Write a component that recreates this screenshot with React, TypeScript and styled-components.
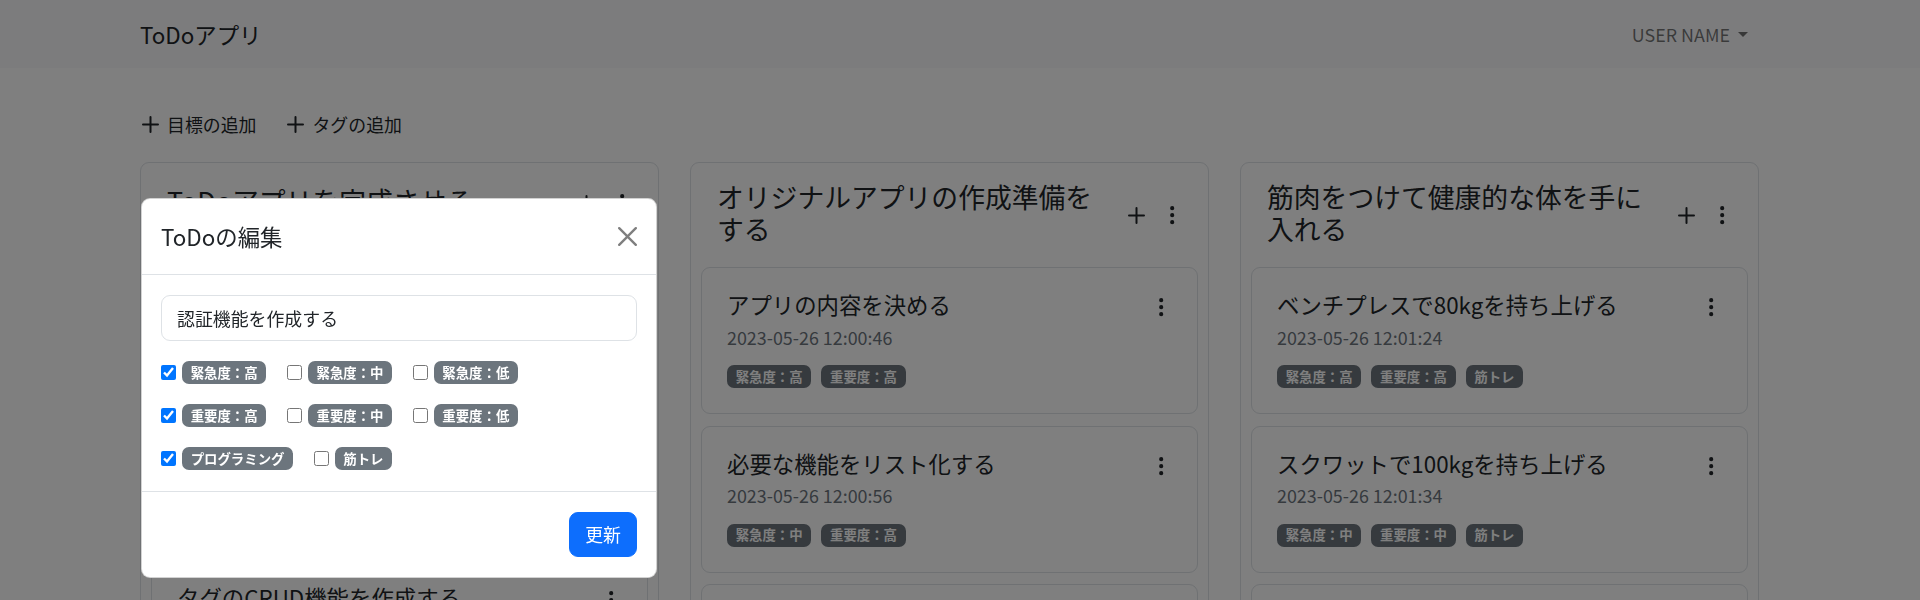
import React from 'react';
import styled, { createGlobalStyle } from 'styled-components';

const GlobalStyle = createGlobalStyle`
  * {
    box-sizing: border-box;
  }
  html,
  body {
    margin: 0;
    padding: 0;
  }
  body {
    font-family: 'Noto Sans CJK JP', 'Noto Sans', sans-serif;
    font-size: 17.9px;
    line-height: 1.7;
    color: #212529;
    background: #fff;
    overflow: hidden;
  }
`;

type TaskT = {
  title: string;
  date: string;
  tags: string[];
};

type GoalT = {
  title: string;
  tasks: TaskT[];
};

const goals: GoalT[] = [
  {
    title: 'ToDoアプリを完成させる',
    tasks: [
      {
        title: '認証機能を作成する',
        date: '2023-05-26 12:00:12',
        tags: ['緊急度：高', '重要度：高', 'プログラミング'],
      },
      {
        title: 'ToDoのCRUD機能を作成する',
        date: '2023-05-26 12:00:24',
        tags: ['緊急度：中', '重要度：高', 'プログラミング'],
      },
      {
        title: 'タグのCRUD機能を作成する',
        date: '2023-05-26 12:00:36',
        tags: ['緊急度：中', '重要度：中', 'プログラミング'],
      },
    ],
  },
  {
    title: 'オリジナルアプリの作成準備をする',
    tasks: [
      { title: 'アプリの内容を決める', date: '2023-05-26 12:00:46', tags: ['緊急度：高', '重要度：高'] },
      { title: '必要な機能をリスト化する', date: '2023-05-26 12:00:56', tags: ['緊急度：中', '重要度：高'] },
      { title: '画面設計を行う', date: '2023-05-26 12:01:06', tags: ['緊急度：低', '重要度：中'] },
    ],
  },
  {
    title: '筋肉をつけて健康的な体を手に入れる',
    tasks: [
      {
        title: 'ベンチプレスで80kgを持ち上げる',
        date: '2023-05-26 12:01:24',
        tags: ['緊急度：高', '重要度：高', '筋トレ'],
      },
      {
        title: 'スクワットで100kgを持ち上げる',
        date: '2023-05-26 12:01:34',
        tags: ['緊急度：中', '重要度：中', '筋トレ'],
      },
      {
        title: 'デッドリフトで120kgを持ち上げる',
        date: '2023-05-26 12:01:44',
        tags: ['緊急度：低', '重要度：中', '筋トレ'],
      },
    ],
  },
];

const tagRows: { label: string; checked: boolean }[][] = [
  [
    { label: '緊急度：高', checked: true },
    { label: '緊急度：中', checked: false },
    { label: '緊急度：低', checked: false },
  ],
  [
    { label: '重要度：高', checked: true },
    { label: '重要度：中', checked: false },
    { label: '重要度：低', checked: false },
  ],
  [
    { label: 'プログラミング', checked: true },
    { label: '筋トレ', checked: false },
  ],
];

/* ---------- navbar ---------- */

const Navbar = styled.nav`
  height: 68px;
  display: flex;
  align-items: center;
  justify-content: space-between;
  padding: 0 162px 0 140px;
  background: #f8f9fa;
`;

const Brand = styled.a`
  font-size: 22.4px;
  line-height: 1.7;
  color: #212529;
  text-decoration: none;
`;

const UserMenu = styled.button`
  display: flex;
  align-items: center;
  padding: 0 10px;
  border: 0;
  background: none;
  font: inherit;
  color: rgba(0, 0, 0, 0.55);
  cursor: pointer;

  &::after {
    content: '';
    margin-left: 8px;
    border-top: 5.4px solid;
    border-left: 5px solid transparent;
    border-right: 5px solid transparent;
  }
`;

/* ---------- board ---------- */

const Main = styled.main`
  padding: 0 162px 0 140px;
`;

const ActionBar = styled.div`
  display: flex;
  align-items: center;
  gap: 31px;
  height: 45px;
  margin-top: 34px;
  padding-left: 2px;
`;

const ActionButton = styled.button`
  display: flex;
  align-items: center;
  gap: 8px;
  padding: 0;
  border: 0;
  background: none;
  font: inherit;
  color: #212529;
  cursor: pointer;
`;

const Board = styled.div`
  display: grid;
  grid-template-columns: repeat(3, 519px);
  column-gap: 31px;
  align-items: start;
  margin-top: 15px;
`;

const Column = styled.section`
  border: 1px solid #dee2e6;
  border-radius: 9px;
  padding: 10px;
`;

const ColumnHeader = styled.div`
  display: flex;
  align-items: center;
  gap: 10px;
  padding: 8px 8px 0 16px;
  margin-bottom: 22px;
`;

const ColumnTitle = styled.h4`
  flex: 1;
  min-width: 0;
  margin: 0;
  font-size: 26.8px;
  font-weight: 400;
  line-height: 1.2;
`;

const HeaderButtons = styled.div`
  display: flex;
  margin-top: 4px;
`;

const IconButton = styled.button`
  width: 36px;
  height: 36px;
  display: flex;
  align-items: center;
  justify-content: center;
  padding: 0;
  border: 0;
  background: none;
  color: #212529;
  cursor: pointer;
`;

const CardList = styled.div`
  display: flex;
  flex-direction: column;
  gap: 11.4px;
`;

const TaskCard = styled.article`
  border: 1px solid #dee2e6;
  border-radius: 9px;
  padding: 23px 25px 25px;
`;

const CardTop = styled.div`
  display: flex;
  align-items: flex-start;
  justify-content: space-between;
  gap: 12px;
`;

const CardTitle = styled.h5`
  margin: 0;
  font-size: 22.4px;
  font-weight: 400;
  line-height: 1.2;
`;

const CardKebab = styled.button`
  display: flex;
  margin-top: 5px;
  padding: 0;
  border: 0;
  background: none;
  color: #212529;
  cursor: pointer;
`;

const DateText = styled.div`
  margin-top: 3px;
  color: #6c757d;
`;

const TagList = styled.div`
  display: flex;
  gap: 10px;
  margin-top: 13.3px;
`;

const Badge = styled.span`
  display: inline-block;
  padding: 4.7px 8.7px;
  border-radius: 7px;
  background: #6c757d;
  color: #fff;
  font-size: 13.4px;
  font-weight: 700;
  line-height: 1;
  white-space: nowrap;
`;

/* ---------- modal ---------- */

const Backdrop = styled.div`
  position: fixed;
  inset: 0;
  background: rgba(0, 0, 0, 0.5);
`;

const Dialog = styled.div`
  position: fixed;
  left: 141px;
  top: 198px;
  width: 516px;
  background: #fff;
  border: 1px solid rgba(0, 0, 0, 0.175);
  border-radius: 9px;
`;

const ModalHeader = styled.div`
  height: 76px;
  display: flex;
  align-items: center;
  justify-content: space-between;
  padding: 0 19px;
  border-bottom: 1px solid #dee2e6;
`;

const ModalTitle = styled.h5`
  margin: 0;
  font-size: 22.4px;
  font-weight: 400;
  line-height: 1.7;
`;

const CloseButton = styled.button`
  display: flex;
  padding: 0;
  border: 0;
  background: none;
  color: #000;
  opacity: 0.5;
  cursor: pointer;
`;

const ModalBody = styled.div`
  padding: 20px 19px 21px;
`;

const TextInput = styled.input`
  display: block;
  width: 100%;
  height: 46px;
  padding: 0 15px;
  border: 1px solid #dee2e6;
  border-radius: 9px;
  font: inherit;
  color: #212529;
  outline: none;
`;

const TagRow = styled.div`
  display: flex;
  align-items: center;
  height: 23px;
  margin-top: 20px;
`;

const TagOption = styled.label`
  display: flex;
  align-items: center;
  gap: 6px;
  margin-right: 20.5px;
`;

const Checkbox = styled.input`
  width: 15px;
  height: 15px;
  margin: 0;
`;

const ModalFooter = styled.div`
  display: flex;
  justify-content: flex-end;
  padding: 20px 19px 19.5px;
  border-top: 1px solid #dee2e6;
`;

const PrimaryButton = styled.button`
  height: 45px;
  padding: 0 15px;
  border: 1px solid #0d6efd;
  border-radius: 9px;
  background: #0d6efd;
  color: #fff;
  font: inherit;
  cursor: pointer;
`;

/* ---------- icons ---------- */

function PlusIcon() {
  return (
    <svg width="17" height="17" viewBox="0 0 17 17" aria-hidden="true">
      <path
        d="M8.5 1v15M1 8.5h15"
        stroke="currentColor"
        strokeWidth="2"
        strokeLinecap="round"
        fill="none"
      />
    </svg>
  );
}

function KebabIcon() {
  return (
    <svg width="22.4" height="22.4" viewBox="0 0 16 16" fill="currentColor" aria-hidden="true">
      <path d="M9.5 13a1.5 1.5 0 1 1-3 0 1.5 1.5 0 0 1 3 0m0-5a1.5 1.5 0 1 1-3 0 1.5 1.5 0 0 1 3 0m0-5a1.5 1.5 0 1 1-3 0 1.5 1.5 0 0 1 3 0" />
    </svg>
  );
}

function CloseIcon() {
  return (
    <svg width="19" height="19" viewBox="0 0 16 16" fill="currentColor" aria-hidden="true">
      <path d="M.293.293a1 1 0 0 1 1.414 0L8 6.586 14.293.293a1 1 0 1 1 1.414 1.414L9.414 8l6.293 6.293a1 1 0 0 1-1.414 1.414L8 9.414l-6.293 6.293a1 1 0 0 1-1.414-1.414L6.586 8 .293 1.707a1 1 0 0 1 0-1.414" />
    </svg>
  );
}

/* ---------- components ---------- */

function Task({ task }: { task: TaskT }) {
  return (
    <TaskCard>
      <CardTop>
        <CardTitle>{task.title}</CardTitle>
        <CardKebab aria-label="menu">
          <KebabIcon />
        </CardKebab>
      </CardTop>
      <DateText>{task.date}</DateText>
      <TagList>
        {task.tags.map((tag) => (
          <Badge key={tag}>{tag}</Badge>
        ))}
      </TagList>
    </TaskCard>
  );
}

function GoalColumn({ goal }: { goal: GoalT }) {
  return (
    <Column>
      <ColumnHeader>
        <ColumnTitle>{goal.title}</ColumnTitle>
        <HeaderButtons>
          <IconButton aria-label="add">
            <PlusIcon />
          </IconButton>
          <IconButton aria-label="menu">
            <KebabIcon />
          </IconButton>
        </HeaderButtons>
      </ColumnHeader>
      <CardList>
        {goal.tasks.map((task) => (
          <Task key={task.title} task={task} />
        ))}
      </CardList>
    </Column>
  );
}

function EditModal() {
  return (
    <>
      <Backdrop />
      <Dialog role="dialog">
        <ModalHeader>
          <ModalTitle>ToDoの編集</ModalTitle>
          <CloseButton aria-label="close">
            <CloseIcon />
          </CloseButton>
        </ModalHeader>
        <ModalBody>
          <TextInput defaultValue="認証機能を作成する" />
          {tagRows.map((row, i) => (
            <TagRow key={i}>
              {row.map((opt) => (
                <TagOption key={opt.label}>
                  <Checkbox type="checkbox" defaultChecked={opt.checked} />
                  <Badge>{opt.label}</Badge>
                </TagOption>
              ))}
            </TagRow>
          ))}
        </ModalBody>
        <ModalFooter>
          <PrimaryButton>更新</PrimaryButton>
        </ModalFooter>
      </Dialog>
    </>
  );
}

export default function App() {
  return (
    <>
      <GlobalStyle />
      <Navbar>
        <Brand href="#">ToDoアプリ</Brand>
        <UserMenu>USER NAME</UserMenu>
      </Navbar>
      <Main>
        <ActionBar>
          <ActionButton>
            <PlusIcon />
            目標の追加
          </ActionButton>
          <ActionButton>
            <PlusIcon />
            タグの追加
          </ActionButton>
        </ActionBar>
        <Board>
          {goals.map((goal) => (
            <GoalColumn key={goal.title} goal={goal} />
          ))}
        </Board>
      </Main>
      <EditModal />
    </>
  );
}
